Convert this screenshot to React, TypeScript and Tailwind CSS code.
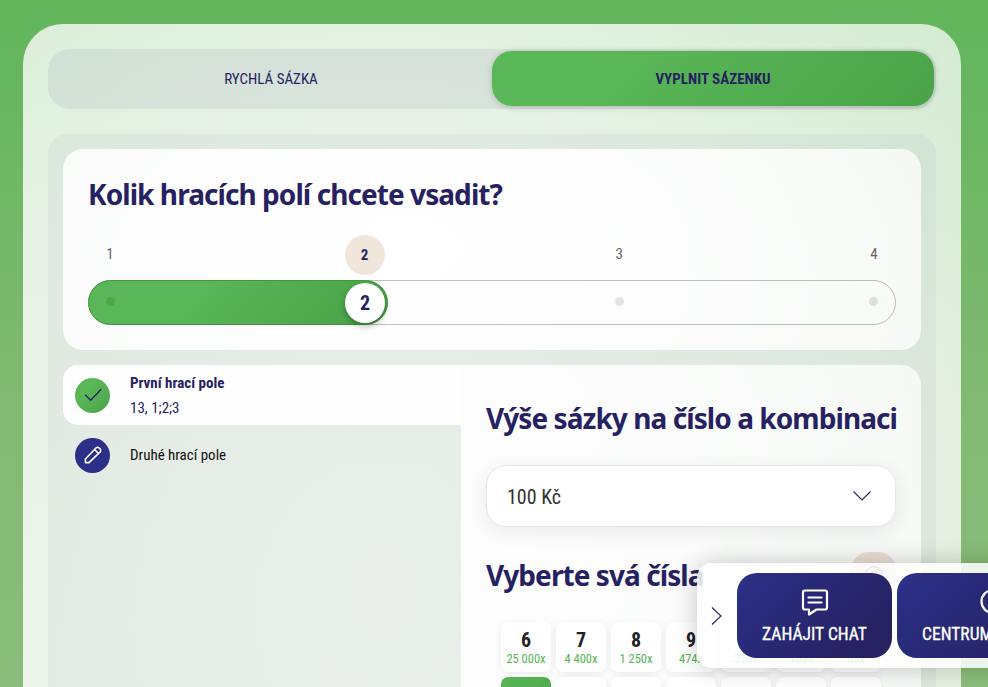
import { ReactNode } from "react";

const steps = [1, 2, 3, 4];

const odds = [
  { count: 6, rate: "25 000x" },
  { count: 7, rate: "4 400x" },
  { count: 8, rate: "1 250x" },
  { count: 9, rate: "474x" },
  { count: 10, rate: "210x" },
  { count: 11, rate: "105x" },
  { count: 12, rate: "55x" },
];

function Heading({ children }: { children: ReactNode }) {
  return (
    <h2 className="whitespace-nowrap font-['Noto_Sans',sans-serif] text-[28px] font-bold leading-[34px] tracking-[-0.93px] text-[#262262] [font-stretch:100%]">
      {children}
    </h2>
  );
}

function Tabs() {
  return (
    <div className="flex h-[60px] rounded-[22px] bg-[#262262]/[0.07] pt-[2px] pr-[2px] pb-[3px] text-[15px] text-[#262262]">
      <button className="h-full w-[444px] pt-px pl-[2px]">RYCHLÁ SÁZKA</button>
      <button className="h-full flex-1 rounded-[20px] bg-linear-[135deg,#59b757_30%,#4aa348] pt-px font-bold shadow-[0_1px_6px_rgba(0,0,0,0.2)]">
        VYPLNIT SÁZENKU
      </button>
    </div>
  );
}

function FieldCount() {
  return (
    <section className="h-[201px] rounded-[20px] bg-[radial-gradient(ellipse_580px_330px_at_340px_100px,#fff,rgba(255,255,255,0.87)_60%,rgba(255,255,255,0.75))] px-[25px] pt-[28px]">
      <Heading>Kolik hracích polí chcete vsadit?</Heading>
      <div className="mt-[24px] flex h-[40px] items-center justify-between px-[2px]">
        {steps.map((step) => (
          <span
            key={step}
            className={
              step === 2
                ? "flex size-[40px] items-center justify-center rounded-full bg-[#f1e6dc] pt-px text-[15px] font-bold text-[#262262]"
                : "w-[40px] pb-px text-center text-[15px] text-[#666]"
            }
          >
            {step}
          </span>
        ))}
      </div>
      <div className="relative mt-[5px] flex h-[45px] items-center justify-between rounded-full border border-black/25 px-[17px]">
        <div className="absolute -top-px -left-px flex h-[45px] w-[300px] items-center justify-end rounded-full border border-[#439341] bg-linear-[135deg,#59b757_35%,#48a146] pr-[2px]">
          <span className="flex size-[40px] items-center justify-center rounded-full bg-white pt-px text-[20px] font-bold text-[#262262] shadow-[0_3px_6px_rgba(0,0,0,0.3)]">
            2
          </span>
        </div>
        {steps.map((step) => (
          <i key={step} className={step === 2 ? "size-[9px]" : "relative mb-[3px] size-[9px] rounded-full bg-black/10"} />
        ))}
      </div>
    </section>
  );
}

function FieldList() {
  return (
    <div className="w-[398px] shrink-0">
      <div className="flex h-[60px] items-center rounded-l-[15px] bg-white/95 pl-[12px]">
        <span className="flex size-[35px] items-center justify-center rounded-full bg-linear-[135deg,#59b757_35%,#4aa348]">
          <svg className="size-[18px]" viewBox="0 0 18 18" fill="none" stroke="#262262" strokeWidth="1.3">
            <path d="M1.2 8.8 6.7 14.2 17.2 3.2" />
          </svg>
        </span>
        <div className="ml-[20px] pt-[2px] text-[15px] leading-[25px] text-[#262262]">
          <p className="font-bold">První hrací pole</p>
          <p>13, 1;2;3</p>
        </div>
      </div>
      <div className="flex h-[60px] items-center pl-[12px]">
        <span className="flex size-[35px] items-center justify-center rounded-full bg-[#2b2f88]">
          <svg className="size-[18px]" viewBox="0 0 18 18" fill="none" stroke="white" strokeWidth="1.6" strokeLinecap="round" strokeLinejoin="round">
            <path d="M1.4 16.6V13L12.2 1.8Q13.6.8 15 1.8L16.2 3Q17.2 4.4 16.2 5.8L5 16.6ZM10.5 3.5 14.5 7.5" />
          </svg>
        </span>
        <p className="ml-[20px] text-[15px] text-[#111]">Druhé hrací pole</p>
      </div>
    </div>
  );
}

function Ticket() {
  return (
    <div className="min-w-0 flex-1 rounded-tr-[20px] bg-[radial-gradient(ellipse_480px_700px_at_0px_150px,rgba(255,255,255,0.9),rgba(255,255,255,0.85)_50%,rgba(255,255,255,0.73))] px-[25px] pt-[36px]">
      <Heading>Výše sázky na číslo a kombinaci</Heading>
      <div className="mt-[30px] flex h-[62px] items-center justify-between rounded-[20px] border border-[#e6e5ee] bg-white pr-[24px] pl-[20px] text-[20px] text-[#333] shadow-[0_5px_20px_rgba(0,0,0,0.08)]">
        <span className="pt-px">100 Kč</span>
        <svg className="h-[10px] w-[18px]" viewBox="0 0 18 10" fill="none" stroke="#262262" strokeWidth="1.1">
          <path d="M.5.5 9 9 17.5.5" />
        </svg>
      </div>
      <div className="mt-[25px] flex h-[45px] items-center justify-between">
        <Heading>Vyberte svá čísla</Heading>
        <span className="flex size-[45px] items-center justify-center rounded-[18px] bg-[#eadfd3] text-[#262262]">
          <svg className="size-[18px]" viewBox="0 0 18 18" fill="none" stroke="currentColor">
            <circle cx="9" cy="9" r="8.3" />
            <path d="M6.5 7Q6.5 4.7 9 4.7T11.5 7Q11.5 8.2 9 9.5V11M9 12.5V14" />
          </svg>
        </span>
      </div>
      <div className="mx-[15px] mt-[25px] grid w-[380px] grid-cols-7 gap-[5px]">
        {odds.map((item) => (
          <div key={item.count} className="h-[50px] rounded-[7px] bg-white pt-[8px] text-center shadow-[0_2px_7px_rgba(0,0,0,0.07)]">
            <p className="text-[20px] leading-[21px] font-bold text-[#222]">{item.count}</p>
            <p className="text-[12.5px] leading-[15px] whitespace-nowrap text-[#55b353]">{item.rate}</p>
          </div>
        ))}
        {odds.map((item, i) => (
          <div
            key={item.count}
            className={
              i === 0
                ? "h-[50px] rounded-[7px] bg-linear-[135deg,#59b757,#4aa348]"
                : "h-[50px] rounded-[7px] bg-white shadow-[0_2px_7px_rgba(0,0,0,0.07)]"
            }
          />
        ))}
      </div>
    </div>
  );
}

function SupportBar() {
  return (
    <div className="absolute top-[563px] left-[697px] flex h-[105px] w-[400px] items-center gap-[5px] rounded-l-[15px] bg-white/85 pl-[14px] text-[17.5px] text-white shadow-[0_0_25px_rgba(0,0,0,0.22)]">
      <svg className="mr-[10px] h-[18px] w-[11px] shrink-0" viewBox="0 0 11 18" fill="none" stroke="#262262" strokeWidth="1.1">
        <path d="M1 .5 10 9 1 17.5" />
      </svg>
      <button className="flex h-[85px] w-[155px] shrink-0 flex-col items-center rounded-[20px] bg-linear-[135deg,#2b3089,#262262_80%] pt-[15px]">
        <svg className="size-[28px]" viewBox="0 0 28 28" fill="none" stroke="white" strokeWidth="2.2" strokeLinecap="round" strokeLinejoin="round">
          <path d="M4 2.5H24Q26 2.5 26 4.5V19.5Q26 21.5 24 21.5H15.5L8 26.5V21.5H4Q2 21.5 2 19.5V4.5Q2 2.5 4 2.5ZM7.5 9.5H20.5M7.5 14.5H20.5" />
        </svg>
        <span className="mt-[5px] leading-[26px] [-webkit-text-stroke:0.3px_white]">ZAHÁJIT CHAT</span>
      </button>
      <button className="flex h-[85px] w-[188px] shrink-0 flex-col items-center rounded-[20px] bg-linear-[135deg,#2b3089,#262262_80%] pt-[15px] pr-px">
        <svg className="size-[28px]" viewBox="0 0 28 28" fill="none" stroke="white" strokeWidth="2.2">
          <circle cx="16" cy="13.5" r="11.5" />
          <path d="M12.5 11Q13 7.5 16 7.5T19.5 11Q19.5 13 16 14.5V16.5M16 18.5V20.5" />
        </svg>
        <span className="mt-[5px] pr-[4px] leading-[26px] [-webkit-text-stroke:0.3px_white]">CENTRUM POMOCI</span>
      </button>
    </div>
  );
}

export default function App() {
  return (
    <div className="relative h-screen overflow-hidden bg-linear-[180deg,#63b65c_0%,#65b65e_8%,#82ba73_60%,#8abd7b_100%] px-[23px] pt-[24px] font-['Roboto_Condensed','Roboto',sans-serif] [font-stretch:75%]">
      <main className="h-[700px] w-[938px] rounded-t-[40px] bg-[radial-gradient(ellipse_760px_900px_at_360px_560px,rgba(255,255,255,0.9),rgba(255,255,255,0.82)_60%,rgba(255,255,255,0.72))] p-[25px]">
        <Tabs />
        <div className="mt-[25px] h-[600px] rounded-t-[20px] bg-[#262262]/[0.04] p-[15px]">
          <FieldCount />
          <div className="mt-[15px] flex h-[400px]">
            <FieldList />
            <Ticket />
          </div>
        </div>
      </main>
      <SupportBar />
    </div>
  );
}
